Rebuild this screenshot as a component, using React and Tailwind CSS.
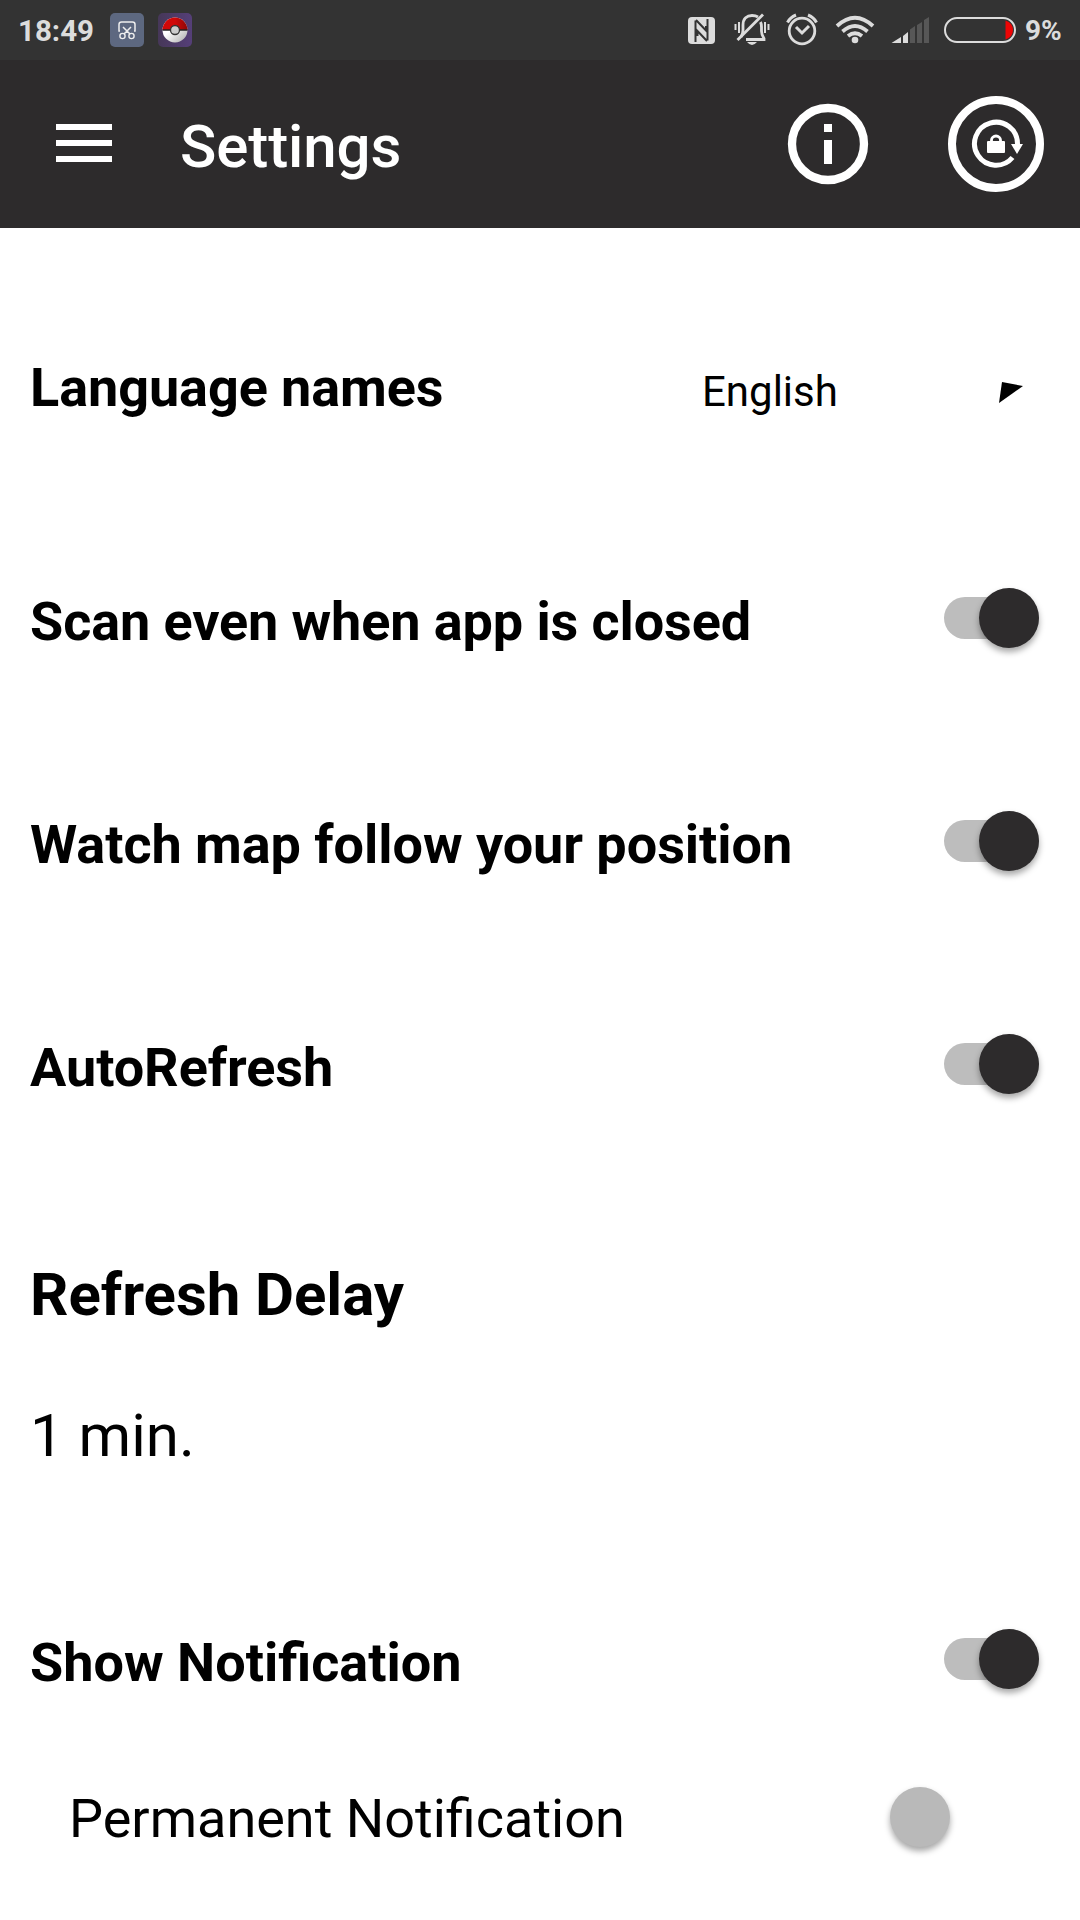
const Glyph = ({ w, h, className = "", children }) => (
  <svg width={w} height={h} viewBox={`0 0 ${w} ${h}`} fill="none" className={`shrink-0 ${className}`}>
    {children}
  </svg>
);

function StatusBar() {
  return (
    <div className="flex h-[60px] items-center bg-[#333333] pl-[18px] text-[29.5px] font-bold text-[#dcdcdc]">
      <span className="mt-[2px] w-[92px] leading-[60px]">18:49</span>
      <Glyph w={34} h={34}>
        <rect width="34" height="34" rx="5" fill="#5d6880" />
        <path d="M10 18H9V11.500Q9 9 11.500 9H22.500Q25 9 25 11.500V18H24M13 14l7 7M21 14l-7 7" stroke="#eee" strokeWidth="1.500" />
        <circle cx="12.500" cy="23" r="2.600" stroke="#eee" strokeWidth="1.400" />
        <circle cx="21.500" cy="23" r="2.600" stroke="#eee" strokeWidth="1.400" />
      </Glyph>
      <Glyph w={34} h={34} className="ml-[14px]">
        <defs>
          <linearGradient id="shell" x1="0" y1="0" x2="1" y2="1">
            <stop offset="0.400" stopColor="#fff" />
            <stop offset="1" stopColor="#aaa" />
          </linearGradient>
          <linearGradient id="cap" x1="0" y1="0" x2="1" y2="0">
            <stop offset="0.500" stopColor="#d00808" />
            <stop offset="1" stopColor="#8d0808" />
          </linearGradient>
          <linearGradient id="violet" x1="0" y1="0" x2="1" y2="0">
            <stop stopColor="#463758" />
            <stop offset="1" stopColor="#553f78" />
          </linearGradient>
        </defs>
        <rect width="34" height="34" rx="5" fill="url(#violet)" />
        <circle cx="17" cy="17" r="12.500" fill="url(#shell)" />
        <path d="M4.500 17a12.500 12.500 0 0 1 25 0Z" fill="url(#cap)" />
        <path d="M4.500 17h25" stroke="#222" strokeWidth="1.500" />
        <circle cx="17" cy="17" r="4.500" fill="#ccc" stroke="#333" strokeWidth="1.300" />
      </Glyph>
      <div className="ml-auto flex items-center">
        <Glyph w={27} h={60}>
          <rect y="17" width="27" height="27" rx="4" fill="#dcdcdc" />
          <path d="M7.500 42V20.500M8 20L18 30.500V26M19.500 19V40.500M19 41L9.500 31V36" stroke="#333" strokeWidth="2" />
        </Glyph>
        <Glyph w={36} h={60} className="ml-[19px]">
          <path d="M7 37Q9 34 9 30V25C9 18.500 13 15.500 18 15.500C20.500 15.500 22.500 16 24 17M26.500 22Q27.500 24 27.500 27V31Q27.500 35 30 38.500V39.500H12" stroke="#dcdcdc" strokeWidth="2.800" />
          <path d="M3.500 40L29 14.500" stroke="#dcdcdc" strokeWidth="2.800" />
          <path d="M1.500 24v6M5 22v11M31 22v11M34.500 24v6" stroke="#dcdcdc" strokeWidth="2" />
          <path d="M13 42h10q-5 6-10 0Z" fill="#dcdcdc" />
        </Glyph>
        <Glyph w={34} h={60} className="ml-[15px]">
          <circle cx="17" cy="31" r="12.800" stroke="#dcdcdc" strokeWidth="2.800" />
          <path d="M11 27l6 6 7-7M2.500 22.500Q5 17.500 11 15M31.500 22.500Q29 17.500 23 15" stroke="#dcdcdc" strokeWidth="3" />
        </Glyph>
        <Glyph w={40} h={60} className="ml-[16px]">
          <path d="M2 26Q20 9.500 38 26M7.500 31.500Q20 20.500 32.500 31.500M13 36Q20 30.500 27 36" stroke="#dcdcdc" strokeWidth="3.800" />
          <circle cx="20" cy="40" r="3.300" fill="#dcdcdc" />
        </Glyph>
        <Glyph w={38} h={60} className="ml-[16px] mr-[1px]">
          <path d="M0.500 43L10 37V43ZM12 36L17 32V43H12Z" fill="#dcdcdc" />
          <path d="M19 29.500L24 26V43H19ZM26 25L31 22V43H26ZM33 20L38 17V43H33Z" fill="#575757" />
        </Glyph>
        <Glyph w={72} h={60} className="ml-[14px]">
          <rect x="1" y="18" width="70" height="24" rx="12" stroke="#dcdcdc" strokeWidth="2" />
          <path d="M61.500 20.500Q69 23 69 30T61.500 39.500Z" fill="#ee0505" />
        </Glyph>
        <span className="ml-[9px] mt-[1px] w-[55px] text-[28px] leading-[60px]">9%</span>
      </div>
    </div>
  );
}

function AppBar() {
  return (
    <header className="flex h-[168px] items-center bg-[#2d2b2c] pb-[2px] pl-14 pr-9 text-white">
      <div className="-mt-[1px] flex w-14 flex-col gap-[10px]">
        <div className="h-[6px] bg-white" />
        <div className="h-[6px] bg-white" />
        <div className="h-[6px] bg-white" />
      </div>
      <h1 className="ml-[68px] mt-[8px] text-[60px] font-medium leading-[70px] tracking-[-0.1px]">Settings</h1>
      <Glyph w={82} h={82} className="ml-auto mt-[2px]">
        <circle cx="41" cy="41" r="36" stroke="white" strokeWidth="8.300" />
        <path d="M37 21h8v8h-8ZM37 37h8v24h-8Z" fill="white" />
      </Glyph>
      <Glyph w={96} h={96} className="ml-[79px] mt-[2px]">
        <circle cx="48" cy="48" r="44" stroke="white" strokeWidth="8" />
        <path d="M64.500 61.500A21.500 21.500 0 1 1 69.500 48" stroke="white" strokeWidth="5" />
        <path d="M63 48h12l-6 10Z" fill="white" />
        <rect x="39" y="45" width="18" height="12" rx="1" fill="white" />
        <path d="M43.500 46v-2a4.500 4 0 0 1 9 0v2" stroke="white" strokeWidth="2.800" />
      </Glyph>
    </header>
  );
}

const Thumb = ({ className }) => (
  <div className={`size-[60px] rounded-full shadow-[0_4px_6px_rgba(0,0,0,0.35)] ${className}`} />
);

const SwitchOn = () => (
  <div className="mb-[8px] mr-[41px] flex h-[42px] w-[95px] items-center justify-end rounded-full bg-[#bdbdbd]">
    <Thumb className="bg-[#2d2b2c]" />
  </div>
);

const SwitchRow = ({ label, className = "" }) => (
  <div className={`flex h-[223px] items-center justify-between ${className}`}>
    <span className="pl-[30px] text-[54px] font-bold leading-[64px]">{label}</span>
    <SwitchOn />
  </div>
);

export default function App() {
  return (
    <div className="flex h-[1920px] w-[1080px] flex-col overflow-hidden bg-white font-['Roboto',sans-serif] text-black">
      <StatusBar />
      <AppBar />
      <main className="flex flex-col">
        <div className="flex h-[282px] items-center">
          <span className="mt-[37px] w-[702px] pl-[30px] text-[54px] font-bold leading-[64px] tracking-[-0.08px]">Language names</span>
          <span className="mt-[45px] text-[42px] leading-[50px]">English</span>
          <Glyph w={26} h={24} className="ml-auto mr-[56px] mt-[48px]">
            <path d="M4 1L25 5L1 22Z" fill="black" />
          </Glyph>
        </div>
        <SwitchRow label="Scan even when app is closed" className="tracking-[-0.11px]" />
        <SwitchRow label="Watch map follow your position" className="tracking-[-0.05px]" />
        <SwitchRow label="AutoRefresh" className="tracking-[-0.05px]" />
        <h2 className="mt-[81px] pl-[30px] text-[60px] font-bold leading-[70px] tracking-[-0.05px]">Refresh Delay</h2>
        <p className="mt-[71px] pl-[30px] text-[60px] leading-[70px]">1 min.</p>
        <SwitchRow label="Show Notification" className="mt-[80px]" />
        <div className="-mt-[7px] flex h-[100px] items-center pl-[69px] pr-[130px]">
          <span className="mt-[3px] text-[54px] leading-[64px]">Permanent Notification</span>
          <Thumb className="ml-auto bg-[#b9b9b9]" />
        </div>
      </main>
    </div>
  );
}
